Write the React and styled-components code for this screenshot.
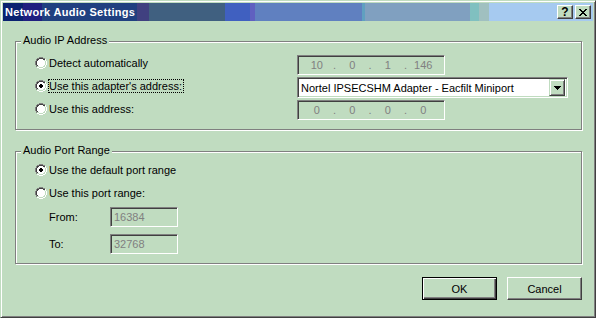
import React from "react";
import styled, { createGlobalStyle } from "styled-components";

const FACE = "#c0dcc0";

const GlobalStyle = createGlobalStyle`
  * {
    box-sizing: border-box;
  }
  body {
    margin: 0;
    background: ${FACE};
  }
`;

// pixel maps for the little classic widgets
const RADIO = [
  "....gggg....",
  "..ggddddgg..",
  ".gddwwwwddh.",
  ".gdwwwwwwlh.",
  "gdwwwwwwwwlh",
  "gdwwwwwwwwlh",
  "gdwwwwwwwwlh",
  "gdwwwwwwwwlh",
  ".gdwwwwwwlh.",
  ".gllwwwwllh.",
  "..hhllllhh..",
  "....hhhh....",
];

const RADIO_ON = [
  "....gggg....",
  "..ggddddgg..",
  ".gddwwwwddh.",
  ".gdwwwwwwlh.",
  "gdwwwxxwwwlh",
  "gdwwxxxxwwlh",
  "gdwwxxxxwwlh",
  "gdwwwxxwwwlh",
  ".gdwwwwwwlh.",
  ".gllwwwwllh.",
  "..hhllllhh..",
  "....hhhh....",
];

const RADIO_COLORS = {
  g: "#808080",
  d: "#404040",
  h: "#ffffff",
  l: FACE,
  w: "#ffffff",
  x: "#000000",
};

const CLOSE = [
  "xx....xx",
  ".xx..xx.",
  "..xxxx..",
  "...xx...",
  "..xxxx..",
  ".xx..xx.",
  "xx....xx",
];

const ARROW = ["xxxxxxx", ".xxxxx.", "..xxx..", "...x..."];

const INK = { x: "#000000" };

function PixelArt({ rows, palette }) {
  const w = rows[0].length;
  const h = rows.length;
  const rects = [];
  rows.forEach((row, y) => {
    [...row].forEach((ch, x) => {
      if (palette[ch]) {
        rects.push(
          <rect key={x + "-" + y} x={x} y={y} width="1" height="1" fill={palette[ch]} />
        );
      }
    });
  });
  return (
    <Pixels width={w} height={h} viewBox={`0 0 ${w} ${h}`} shapeRendering="crispEdges">
      {rects}
    </Pixels>
  );
}

function Radio({ label, checked, focused }) {
  return (
    <RadioRow>
      <PixelArt rows={checked ? RADIO_ON : RADIO} palette={RADIO_COLORS} />
      <RadioText $focused={focused}>{label}</RadioText>
    </RadioRow>
  );
}

function IpField({ parts }) {
  return (
    <IpBox>
      {parts.map((p, i) => (
        <React.Fragment key={i}>
          {i > 0 && <IpDot>.</IpDot>}
          <IpPart>{p}</IpPart>
        </React.Fragment>
      ))}
    </IpBox>
  );
}

export default function App() {
  return (
    <>
      <GlobalStyle />
      <Window>
        <TitleBar>
          <Title>Network Audio Settings</Title>
          <CaptionButtons>
            <CaptionButton aria-label="Help">
              <HelpMark>?</HelpMark>
            </CaptionButton>
            <CaptionButton aria-label="Close">
              <PixelArt rows={CLOSE} palette={INK} />
            </CaptionButton>
          </CaptionButtons>
        </TitleBar>

        <Body>
          <Group $height={89}>
            <Legend>Audio IP Address</Legend>
            <IpLayout>
              <RadioColumn $top={9}>
                <Radio label="Detect automatically" />
                <Radio label="Use this adapter's address:" checked focused />
                <Radio label="Use this address:" />
              </RadioColumn>
              <FieldColumn>
                <IpField parts={["10", "0", "1", "146"]} />
                <Combo>
                  <ComboText>Nortel IPSECSHM Adapter - Eacfilt Miniport</ComboText>
                  <ComboButton>
                    <PixelArt rows={ARROW} palette={INK} />
                  </ComboButton>
                </Combo>
                <IpField parts={["0", "0", "0", "0"]} />
              </FieldColumn>
            </IpLayout>
          </Group>

          <Group $height={113} $gap={21}>
            <Legend>Audio Port Range</Legend>
            <RadioColumn $top={6}>
              <Radio label="Use the default port range" checked />
              <Radio label="Use this port range:" />
              <PortRow $gap={3}>
                <PortLabel>From:</PortLabel>
                <PortInput>16384</PortInput>
              </PortRow>
              <PortRow $gap={7}>
                <PortLabel>To:</PortLabel>
                <PortInput>32768</PortInput>
              </PortRow>
            </RadioColumn>
          </Group>

          <Footer>
            <Button $default>OK</Button>
            <Button>Cancel</Button>
          </Footer>
        </Body>
      </Window>
    </>
  );
}

const Window = styled.div`
  width: 596px;
  height: 318px;
  display: flex;
  flex-direction: column;
  padding: 2px;
  background: ${FACE};
  border: 1px solid;
  border-color: ${FACE} #404040 #404040 ${FACE};
  box-shadow: inset 1px 1px #ffffff, inset -1px -1px #808080;
  font-family: "Liberation Sans", Arial, sans-serif;
  font-size: 11px;
  color: #000000;
`;

const TitleBar = styled.div`
  flex: none;
  height: 18px;
  display: flex;
  align-items: center;
  padding: 0 2px;
  background: linear-gradient(
    to right,
    #0a2270 0 20px,
    #202080 20px 39px,
    #204080 39px 134px,
    #404080 134px 146px,
    #406080 146px 222px,
    #4060c0 222px 247px,
    #6060c0 247px 252px,
    #6080c0 252px 359px,
    #60a0c0 359px 362px,
    #80a0c0 362px 467px,
    #80c0c0 467px 476px,
    #a0c0c0 476px 486px,
    #a6caf0 486px
  );
`;

const Title = styled.span`
  color: #ffffff;
  font-weight: bold;
  letter-spacing: 0.3px;
  line-height: 18px;
  white-space: nowrap;
`;

const CaptionButtons = styled.div`
  margin-left: auto;
  display: flex;
  gap: 2px;
`;

const CaptionButton = styled.div`
  width: 16px;
  height: 14px;
  display: flex;
  align-items: center;
  justify-content: center;
  background: ${FACE};
  border: 1px solid;
  border-color: #ffffff #404040 #404040 #ffffff;
  box-shadow: inset -1px -1px #808080;
`;

const HelpMark = styled.span`
  font-size: 12px;
  font-weight: bold;
  line-height: 12px;
`;

const Pixels = styled.svg`
  display: block;
  flex: none;
`;

const Body = styled.div`
  flex: 1;
  display: flex;
  flex-direction: column;
  padding: 20px 11px 0 12px;
`;

const Group = styled.div`
  position: relative;
  flex: none;
  height: ${(p) => p.$height}px;
  margin-top: ${(p) => p.$gap || 0}px;
  border: 1px solid #808080;
  box-shadow: inset 1px 1px #ffffff, 1px 1px #ffffff;
`;

const Legend = styled.span`
  position: absolute;
  left: 5px;
  top: -8px;
  padding: 0 2px;
  line-height: 13px;
  background: ${FACE};
`;

const IpLayout = styled.div`
  display: flex;
`;

const RadioColumn = styled.div`
  width: 281px;
  display: flex;
  flex-direction: column;
  padding: ${(p) => p.$top}px 0 0 19px;
`;

const RadioRow = styled.div`
  height: 23px;
  display: flex;
  align-items: center;
  white-space: nowrap;
`;

const RadioText = styled.span`
  margin-left: 1px;
  padding: 0 1px 0 0;
  line-height: 12px;
  border: 1px dotted ${(p) => (p.$focused ? "#000000" : "transparent")};
`;

const FieldColumn = styled.div`
  display: flex;
  flex-direction: column;
  gap: 2px;
  padding-top: 13px;
`;

const Sunken = styled.div`
  border: 1px solid;
  border-color: #808080 #ffffff #ffffff #808080;
  box-shadow: inset 1px 1px #404040, inset -1px -1px ${FACE};
`;

const IpBox = styled(Sunken)`
  width: 148px;
  height: 20px;
  display: flex;
  padding: 0 3px 0 1px;
  color: #808080;
  line-height: 18px;
`;

const IpPart = styled.span`
  flex: 1;
  text-align: center;
`;

const IpDot = styled.span`
  width: 0;
  display: flex;
  justify-content: center;
`;

const Combo = styled(Sunken)`
  width: 271px;
  height: 21px;
  display: flex;
  align-items: center;
  padding: 2px;
  background: #ffffff;
`;

const ComboText = styled.span`
  flex: 1;
  padding-left: 1px;
  white-space: nowrap;
`;

const ComboButton = styled.div`
  width: 16px;
  height: 17px;
  display: flex;
  align-items: center;
  justify-content: center;
  background: ${FACE};
  border: 1px solid;
  border-color: ${FACE} #404040 #404040 ${FACE};
  box-shadow: inset 1px 1px #ffffff, inset -1px -1px #808080;
`;

const PortRow = styled.div`
  display: flex;
  align-items: center;
  margin-top: ${(p) => p.$gap}px;
  padding-left: 14px;
`;

const PortLabel = styled.span`
  width: 61px;
`;

const PortInput = styled(Sunken)`
  width: 68px;
  height: 20px;
  padding-left: 3px;
  line-height: 18px;
  color: #808080;
`;

const Footer = styled.div`
  display: flex;
  justify-content: flex-end;
  gap: 10px;
  margin-top: 13px;
`;

const Button = styled.div`
  width: 75px;
  height: 23px;
  display: flex;
  align-items: center;
  justify-content: center;
  background: ${FACE};
  border: 1px solid;
  border-color: ${(p) =>
    p.$default ? "#000000" : "#ffffff #404040 #404040 #ffffff"};
  box-shadow: ${(p) =>
    p.$default
      ? "inset 1px 1px #ffffff, inset -1px -1px #404040, inset -2px -2px #808080"
      : "inset -1px -1px #808080"};
`;
